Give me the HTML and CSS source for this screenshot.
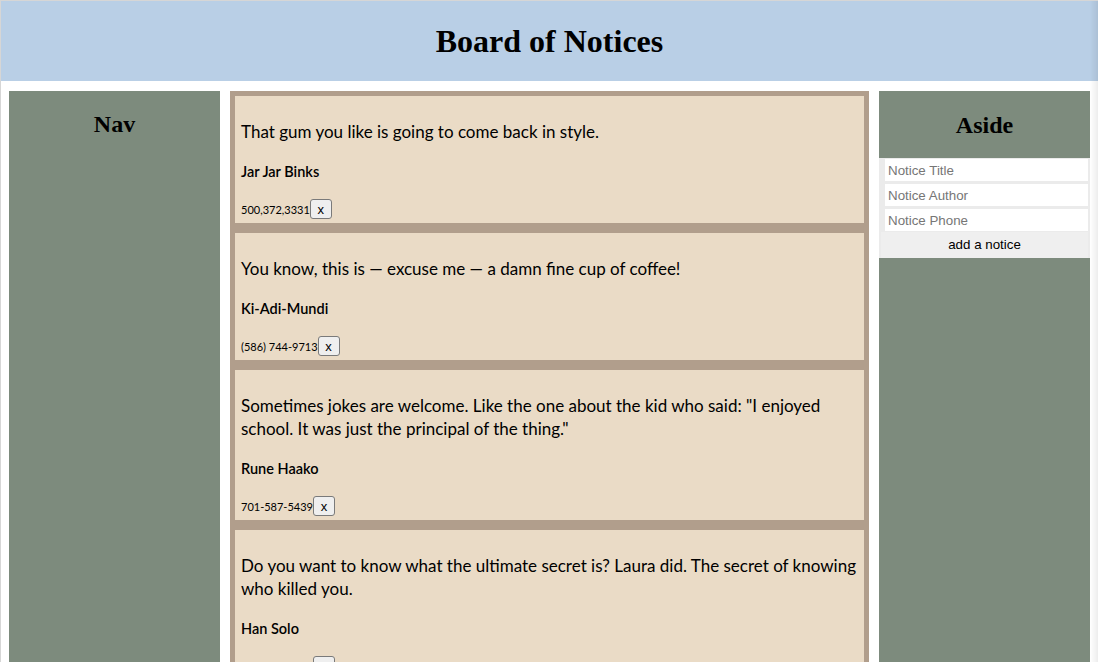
FILE: index.html
```html
<!DOCTYPE html>
<html lang="en">
<head>
<meta charset="utf-8">
<title>Board of Notices</title>
<link rel="stylesheet" href="styles.css">
</head>
<body>
<div class="frame">
  <header class="site-header">
    <h1>Board of Notices</h1>
  </header>
  <div class="layout">
    <nav class="side nav">
      <h2>Nav</h2>
    </nav>
    <main class="board">
      <article class="notice">
        <p class="notice-title">That gum you like is going to come back in style.</p>
        <p class="notice-author">Jar Jar Binks</p>
        <div class="notice-phone"><span>500,372,3331</span><button class="remove">x</button></div>
      </article>
      <article class="notice">
        <p class="notice-title">You know, this is — excuse me — a damn fine cup of coffee!</p>
        <p class="notice-author">Ki-Adi-Mundi</p>
        <div class="notice-phone"><span>(586) 744-9713</span><button class="remove">x</button></div>
      </article>
      <article class="notice">
        <p class="notice-title">Sometimes jokes are welcome. Like the one about the kid who said: "I enjoyed school. It was just the principal of the thing."</p>
        <p class="notice-author">Rune Haako</p>
        <div class="notice-phone"><span>701-587-5439</span><button class="remove">x</button></div>
      </article>
      <article class="notice">
        <p class="notice-title">Do you want to know what the ultimate secret is? Laura did. The secret of knowing who killed you.</p>
        <p class="notice-author">Han Solo</p>
        <div class="notice-phone"><span>555-245-1209</span><button class="remove">x</button></div>
      </article>
    </main>
    <aside class="side aside">
      <h2>Aside</h2>
      <form class="notice-form">
        <input type="text" placeholder="Notice Title">
        <input type="text" placeholder="Notice Author">
        <input type="text" placeholder="Notice Phone">
        <button type="button" class="add">add a notice</button>
      </form>
    </aside>
  </div>
</div>
<div class="edge-shade"></div>
</body>
</html>
```

FILE: styles.css
```css
html, body {
  margin: 0;
  padding: 0;
  background: #ffffff;
}

body {
  font-family: "Liberation Serif", "Times New Roman", serif;
  border-top: 1px solid #d6d6d6;
  border-left: 1px solid #d6d6d6;
  min-height: 661px;
}

.site-header {
  background: #b9cfe6;
  height: 80px;
  display: flex;
  align-items: center;
  justify-content: center;
}

.site-header h1 {
  margin: 0;
  font-size: 32px;
  font-weight: bold;
  color: #000;
}

.layout {
  display: grid;
  grid-template-columns: 211px 1fr 211px;
  column-gap: 10px;
  padding: 10px 8px 0 8px;
}

.side {
  background: #7d8b7d;
}

.side h2 {
  margin: 19.92px 0;
  font-size: 24px;
  font-weight: bold;
  text-align: center;
  color: #000;
}

.aside h2 {
  padding-top: 1px;
  margin-bottom: 19px;
}

.board {
  display: flex;
  flex-direction: column;
}

.notice {
  background: #eadbc6;
  border: 5px solid #b19e8c;
  padding: 0 6px 4px 6px;
  font-family: Lato, "Open Sans", sans-serif;
  color: #000;
}

.notice-title {
  margin: 24px 0 0 0;
  font-size: 17px;
  line-height: 23px;
}

.notice-author {
  margin: 19px 0 0 0;
  font-size: 14.5px;
  line-height: 20px;
  font-weight: 600;
}

.notice-phone {
  margin-top: 17px;
  display: flex;
  align-items: center;
  font-size: 11px;
  height: 20px;
}

.remove {
  width: 22px;
  height: 20px;
  padding: 0;
  margin: 0;
  border: 1px solid #7a7a7a;
  border-radius: 3px;
  background: #efefef;
  font-family: "Liberation Sans", Arial, sans-serif;
  font-size: 13px;
  color: #000;
}

.notice-form {
  display: flex;
  flex-direction: column;
  gap: 3px;
  background: #ebebeb;
  padding: 1px 2px 0 6px;
  margin: 0;
}

.notice-form input {
  height: 22px;
  border: none;
  padding: 1px 3px 0 3px;
  margin: 0;
  background: #fff;
  font-family: "Liberation Sans", Arial, sans-serif;
  font-size: 13.33px;
  box-sizing: border-box;
}

.notice-form input::placeholder {
  color: #767676;
}

.notice-form .add {
  height: 26px;
  border: none;
  margin: -2px 0 0 -4px;
  background: #efefef;
  font-family: "Liberation Sans", Arial, sans-serif;
  font-size: 13.33px;
  color: #000;
}

.edge-shade {
  position: fixed;
  top: 1px;
  right: 0;
  width: 8px;
  bottom: 0;
  background: linear-gradient(to right, rgba(0,0,0,0), rgba(0,0,0,0.07));
  pointer-events: none;
}
```
